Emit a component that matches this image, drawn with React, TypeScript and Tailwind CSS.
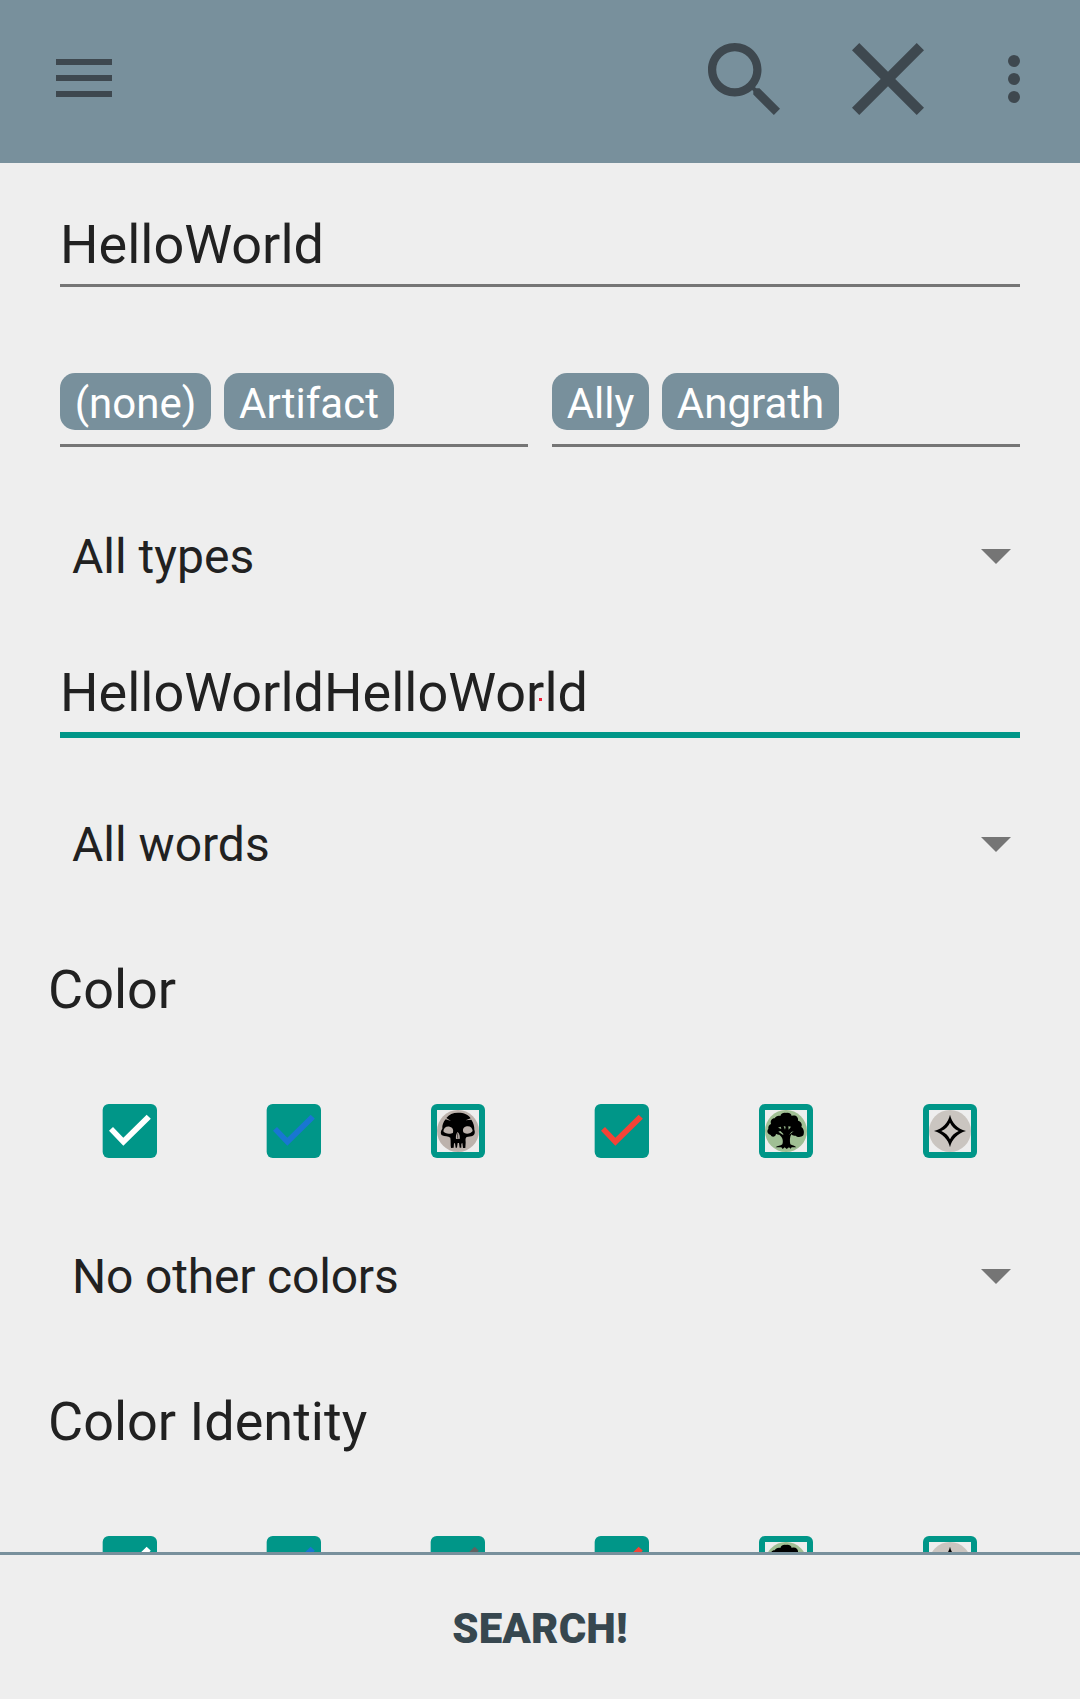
import React from 'react';

const ICON = '#3e484f';

function Check({ color }: { color: string }) {
  return (
    <svg viewBox="0 0 162 162" className="block h-[54px] w-[54px] overflow-visible">
      <rect x="-1" width="163" height="162" rx="18" fill="#009688" />
      <path d="M18 80.5 30 69 61 101 131 32 143.500 44 61 125Z" fill={color} />
    </svg>
  );
}

function Frame({ fill, children }: { fill: string; children: React.ReactNode }) {
  return (
    <svg viewBox="0 0 162 162" className="block h-[54px] w-[54px]">
      <rect width="162" height="162" rx="18" fill="#009688" />
      <rect x="18" y="18" width="126" height="126" fill="#eeeeee" />
      <circle cx="81" cy="81" r="63" fill={fill} />
      {children}
    </svg>
  );
}

function Skull() {
  return (
    <Frame fill="#bcb2ac">
      <path d="M81 26C99 26 113 32 119 43L104 49 121 47C128 57 130 66 130 77 134 88 129 95 121 97L107 99C102 102 104 108 104 116L103 132 96 132 94 117 91 119 91 131 86 131 84 117 80 117 78 131 74 131 72 118 69 118 68 131 60 132C58 121 60 112 58 101 52 96 41 98 33 94 27 88 30 79 34 74 33 64 37 54 44 46L60 51 46 42C54 31 66 26 81 26Z" fill="#000" />
      <path d="M37 82C38 71 46 66 56 68 65 70 68 76 66 86 59 91 41 90 37 82ZM97 85C94 75 98 69 108 67 118 66 124 71 125 81 120 89 104 92 97 85ZM80 84C75 90 74 98 75 105L81 104 86 105C87 98 86 90 80 84Z" fill="#bcb2ac" />
      <path d="M80 88V103" stroke="#4f4946" strokeWidth="3" />
    </Frame>
  );
}

function Tree() {
  return (
    <Frame fill="#a0bf94">
      <path d="M81 27C91 25 98 31 98 36 109 32 119 39 117 50 126 52 131 61 127 69 136 75 136 87 133 94 127 100 114 100 110 95 104 97 99 93 97 91 92 99 92 111 94 121 100 125 107 125 112 130L98 130 95 134 90 130 83 135 77 130 71 135 67 130 50 130C55 124 65 127 70 121 74 110 70 99 61 92 55 93 53 90 51 90 50 99 38 101 35 93 26 90 22 81 28 75 27 67 30 62 36 60 33 51 38 43 47 43 50 37 57 34 64 36 66 29 74 25 81 27Z" fill="#000" />
      <path d="M57 71 65 68 67 75ZM74 66 80 68 78 77ZM88 67 96 68 89 77ZM58 83 64 81 74 91 71 92ZM104 82 97 84 90 93Z" fill="#a0bf94" />
    </Frame>
  );
}

function Diamond() {
  return (
    <Frame fill="#cac5c0">
      <path fillRule="evenodd" d="M81 32C86 55 103 74 129 81 103 88 86 107 81 130 76 107 59 88 33 81 59 74 76 55 81 32ZM81 56C76 67 68 75 55 81 68 87 76 95 81 106 86 95 94 87 107 81 94 75 86 67 81 56Z" fill="#000" />
    </Frame>
  );
}

function Row({ items }: { items: React.ReactNode[] }) {
  return (
    <div className="grid grid-cols-6">
      {items.map((item, i) => (
        <div key={i} className="flex justify-center">{item}</div>
      ))}
    </div>
  );
}

function Chip({ children, width }: { children: string; width: string }) {
  return (
    <span className={`flex h-[57px] items-center justify-center rounded-[15px] bg-[#78909c] pt-[4px] text-[42px] leading-[43px] text-white ${width}`}>
      {children}
    </span>
  );
}

function Select({ label, tracking = '' }: { label: string; tracking?: string }) {
  return (
    <div className="flex h-[72px] items-center justify-between pr-[21px] pl-[24px] text-[48px] leading-[72px]">
      <span className={tracking}>{label}</span>
      <svg viewBox="0 0 30 15" className="mb-[2px] h-[15px] w-[30px]">
        <path d="M0 0H30L15 15Z" fill="#757575" />
      </svg>
    </div>
  );
}

export default function App() {
  return (
    <div className="flex h-[1699px] w-[1080px] flex-col overflow-hidden bg-[#eeeeee] font-['Roboto',sans-serif] text-[#212121]">
      <header className="flex h-[163px] shrink-0 items-start bg-[#78909c]">
        <div className="mt-[59px] ml-[56px] flex w-[56px] flex-col gap-[10px]">
          <div className="h-[6px] bg-[#3e484f]" />
          <div className="h-[6px] bg-[#3e484f]" />
          <div className="h-[6px] bg-[#3e484f]" />
        </div>
        <svg viewBox="3 3 17.49 17.49" className="mt-[43px] ml-[596px] h-[72px] w-[72px]">
          <path fill={ICON} d="M15.5 14h-.79l-.28-.27C15.41 12.59 16 11.11 16 9.5 16 5.91 13.09 3 9.5 3S3 5.91 3 9.5 5.91 16 9.5 16c1.61 0 3.09-.59 4.23-1.57l.27.28v.79l5 4.99L20.49 19l-4.99-5zm-6 0C7.01 14 5 11.99 5 9.5S7.01 5 9.5 5 14 7.01 14 9.5 11.99 14 9.5 14z" />
        </svg>
        <svg viewBox="5 5 14 14" className="mt-[43px] ml-[72px] h-[72px] w-[72px]">
          <path fill={ICON} d="M19 6.41 17.59 5 12 10.59 6.41 5 5 6.41 10.59 12 5 17.59 6.41 19 12 13.41 17.59 19 19 17.59 13.41 12z" />
        </svg>
        <div className="mt-[55px] ml-[84px] flex flex-col gap-[6px]">
          <div className="size-[12px] rounded-full bg-[#3e484f]" />
          <div className="size-[12px] rounded-full bg-[#3e484f]" />
          <div className="size-[12px] rounded-full bg-[#3e484f]" />
        </div>
      </header>

      <main className="h-[1389px] shrink-0 overflow-hidden px-[48px]">
        <div className="mx-[12px] mt-[45px] h-[79px] border-b-[3px] border-[#757575] text-[54px] leading-[74px]">HelloWorld</div>

        <div className="mx-[12px] mt-[86px] grid grid-cols-2 gap-[24px]">
          <div className="flex h-[74px] gap-[13px] border-b-[3px] border-[#757575]">
            <Chip width="w-[151px]">(none)</Chip>
            <Chip width="w-[170px]">Artifact</Chip>
          </div>
          <div className="flex h-[74px] gap-[13px] border-b-[3px] border-[#757575]">
            <Chip width="w-[97px]">Ally</Chip>
            <Chip width="w-[177px]">Angrath</Chip>
          </div>
        </div>

        <div className="mt-[74px]">
          <Select label="All types" />
        </div>

        <div className="relative mx-[12px] mt-[63px] h-[82px] border-b-[6px] border-[#009688] text-[54px] leading-[74px]">
          HelloWorldHelloWorld
          <span className="absolute top-[42px] left-[479px] h-[3px] w-[3px] bg-[#f02038]" />
        </div>

        <div className="mt-[71px]">
          <Select label="All words" />
        </div>

        <h2 className="mt-[72px] h-[72px] text-[54px] leading-[74px]">Color</h2>
        <div className="mt-[79px]">
          <Row items={[<Check color="#ffffff" />, <Check color="#1976d2" />, <Skull />, <Check color="#f44336" />, <Tree />, <Diamond />]} />
        </div>

        <div className="mt-[83px]">
          <Select label="No other colors" tracking="tracking-[-0.18px]" />
        </div>

        <h2 className="mt-[72px] h-[72px] text-[54px] leading-[74px]">Color Identity</h2>
        <div className="mt-[79px]">
          <Row items={[<Check color="#ffffff" />, <Check color="#1976d2" />, <Check color="#616161" />, <Check color="#f44336" />, <Tree />, <Diamond />]} />
        </div>
      </main>

      <footer className="flex flex-1 items-center justify-center border-t-[3px] border-[#78909c] pt-[2px] text-[42px] font-black tracking-[0.15px] text-[#37474f]">
        SEARCH!
      </footer>
    </div>
  );
}
